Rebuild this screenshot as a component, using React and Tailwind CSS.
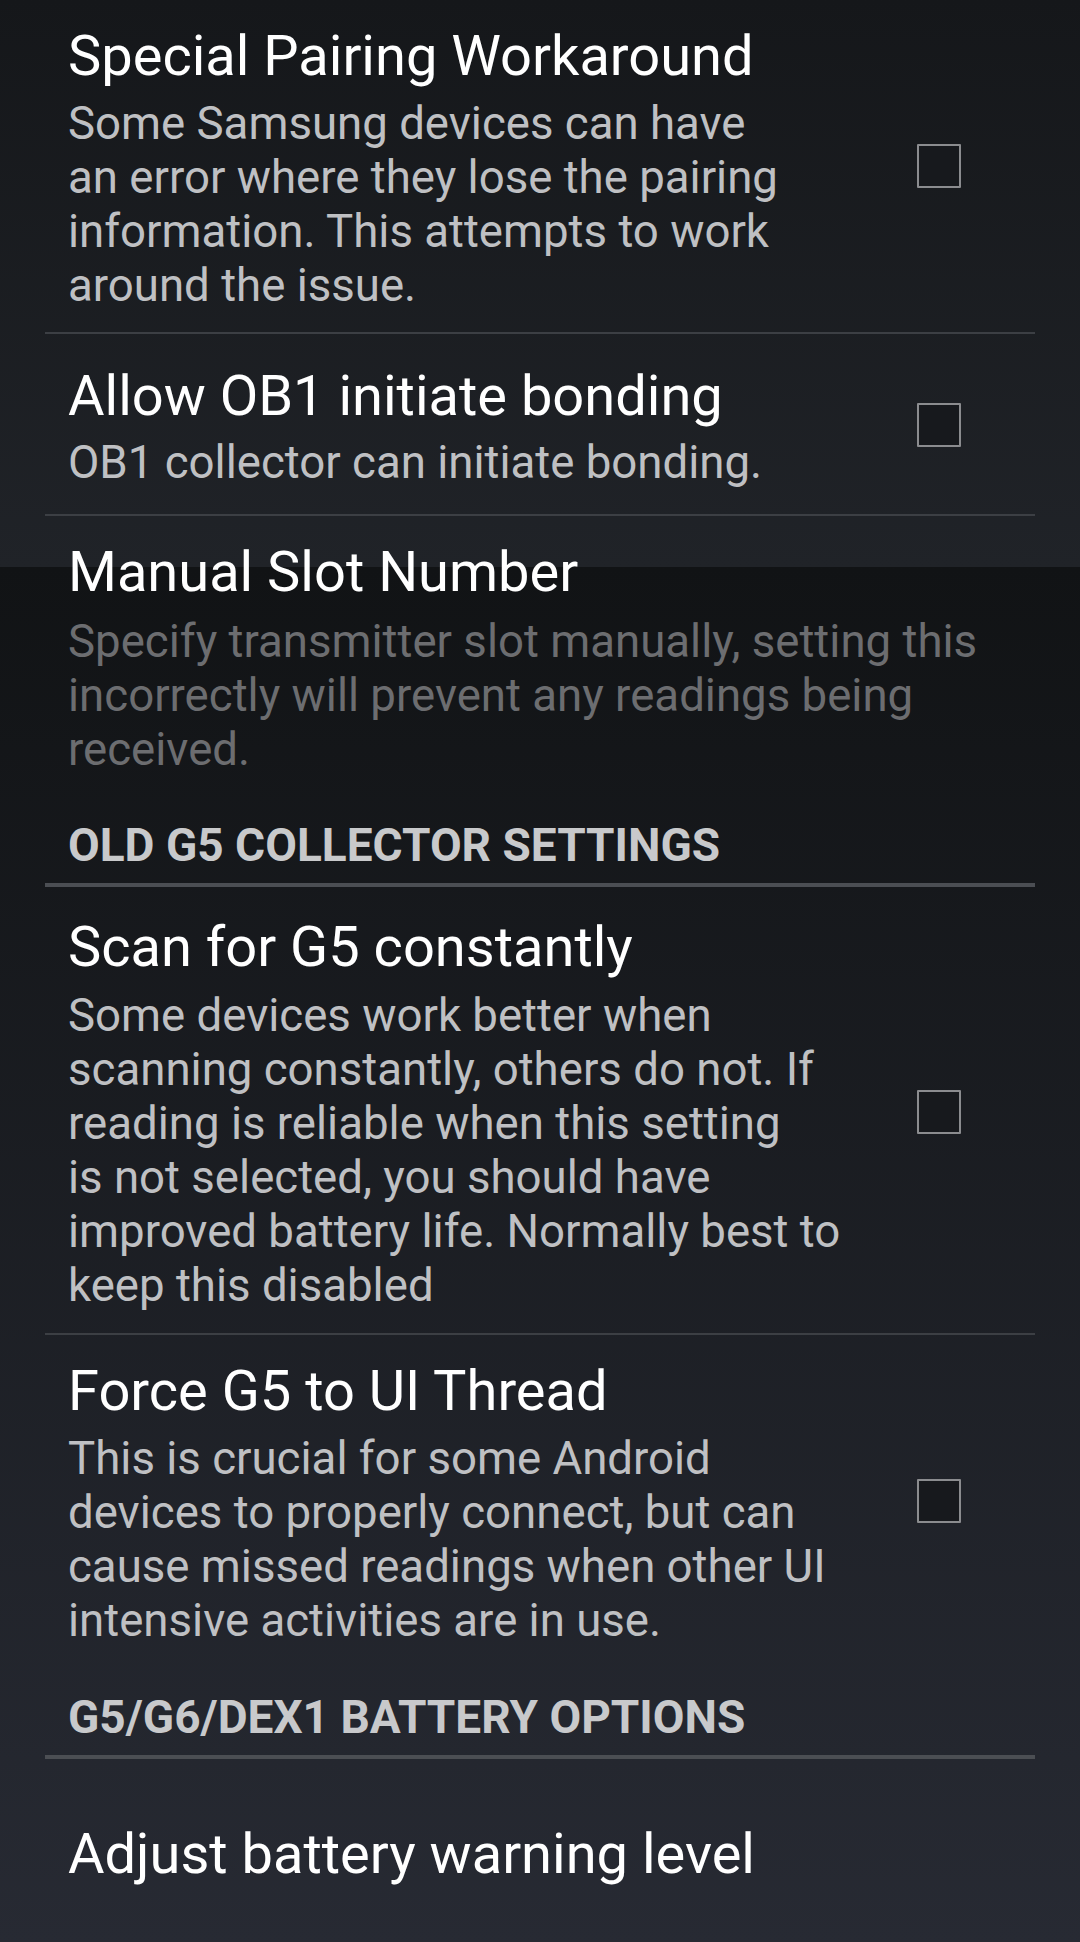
import React from 'react';

const rows = [
  {
    type: 'pref',
    title: 'Special Pairing Workaround',
    lines: [
      'Some Samsung devices can have',
      'an error where they lose the pairing',
      'information. This attempts to work',
      'around the issue.',
    ],
    checkbox: true,
    pt: 'pt-[23px]',
    pb: 'pb-[19px]',
    gap: 'mt-[8px]',
    divider: true,
  },
  {
    type: 'pref',
    title: 'Allow OB1 initiate bonding',
    lines: ['OB1 collector can initiate bonding.'],
    checkbox: true,
    pt: 'pt-[29px]',
    pb: 'pb-[24px]',
    gap: 'mt-[7px]',
    divider: true,
  },
  {
    type: 'pref',
    title: 'Manual Slot Number',
    lines: [
      'Specify transmitter slot manually, setting this',
      'incorrectly will prevent any readings being',
      'received.',
    ],
    disabled: true,
    pt: 'pt-[23px]',
    pb: 'pb-0',
    gap: 'mt-[10px]',
  },
  { type: 'header', label: 'Old G5 Collector Settings', pt: 'pt-[41px]' },
  {
    type: 'pref',
    title: 'Scan for G5 constantly',
    lines: [
      'Some devices work better when',
      'scanning constantly, others do not. If',
      'reading is reliable when this setting',
      'is not selected, you should have',
      'improved battery life. Normally best to',
      'keep this disabled',
    ],
    checkbox: true,
    pt: 'pt-[27px]',
    pb: 'pb-[20px]',
    gap: 'mt-[9px]',
    divider: true,
  },
  {
    type: 'pref',
    title: 'Force G5 to UI Thread',
    lines: [
      'This is crucial for some Android',
      'devices to properly connect, but can',
      'cause missed readings when other UI',
      'intensive activities are in use.',
    ],
    checkbox: true,
    pt: 'pt-[23px]',
    pb: 'pb-[20px]',
    gap: 'mt-[8px]',
  },
  { type: 'header', label: 'G5/G6/Dex1 Battery Options', pt: 'pt-[22px]' },
  {
    type: 'pref',
    title: 'Adjust battery warning level',
    lines: [],
    pt: 'pt-[62px]',
    pb: 'pb-[55px]',
  },
];

function Checkbox() {
  return <div className="w-[44px] h-[44px] mb-[4px] shrink-0 border-2 border-[#8b8c8f] rounded-[1px] bg-[#17191d]" />;
}

function PrefRow({ row }) {
  return (
    <div className={row.divider ? 'border-b-2 border-[#3c3f44]' : ''}>
      <div className={`flex items-center justify-between pl-[23px] pr-[74px] ${row.pt} ${row.pb}`}>
        <div>
          <div className="text-[56px] leading-[66px] text-white whitespace-nowrap">{row.title}</div>
          {row.lines.length > 0 && (
            <div
              className={`${row.gap} text-[45.6px] leading-[54px] whitespace-nowrap ${
                row.disabled ? 'text-[#6c6d70]' : 'text-[#bfc0c3]'
              }`}
            >
              {row.lines.map((line) => (
                <div key={line}>{line}</div>
              ))}
            </div>
          )}
        </div>
        {row.checkbox && <Checkbox />}
      </div>
    </div>
  );
}

function SectionHeader({ row }) {
  return (
    <div className={`${row.pt} pb-[11px] pl-[23px] border-b-4 border-[#4b4e53]`}>
      <div className="text-[46px] leading-[54px] font-bold uppercase text-[#c8c9cb]">{row.label}</div>
    </div>
  );
}

export default function App() {
  return (
    <div
      className="w-[1080px] h-[1942px] overflow-hidden px-[45px] bg-[linear-gradient(to_bottom,#15171a_0px,#202328_567px,#111315_567px,#272a33_1942px)]"
      style={{ fontFamily: 'Roboto, "Noto Sans", sans-serif' }}
    >
      {rows.map((row, i) =>
        row.type === 'header' ? <SectionHeader key={i} row={row} /> : <PrefRow key={i} row={row} />
      )}
    </div>
  );
}
